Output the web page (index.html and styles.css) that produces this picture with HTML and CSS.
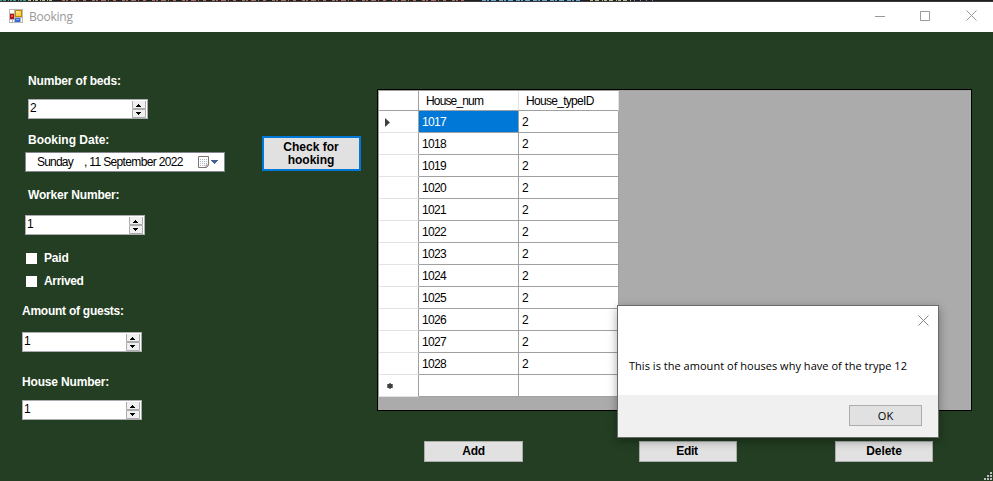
FILE: index.html
```
<!DOCTYPE html>
<html lang="en">
<head>
<meta charset="utf-8">
<title>Booking</title>
<link rel="stylesheet" href="styles.css">
</head>
<body>
<svg class="defs" width="0" height="0">
  <symbol id="close" viewBox="0 0 11 11"><path d="M.5.5l10 10M10.5.5l-10 10" fill="none" stroke="currentColor"/></symbol>
  <symbol id="spin" viewBox="0 0 14 17">
    <path d="M0 0h14v8H0zM0 9h14v8H0z" fill="#f0f0f0"/>
    <path d="M.5 0v7.5h13V0M.5 8.500h13v8H.5z" fill="none" stroke="#acacac"/>
    <path d="M6 3h1v1h1v1h1v1H4V5h1V4h1zM4 11h5v1H8v1H7v1H6v-1H5v-1H4z" fill="#000"/>
  </symbol>
</svg>
<div class="editor">
  <svg width="993" height="1" viewBox="0 0 993 1" fill="none">
    <path d="M0 .5h28" stroke="#3fa08e" stroke-dasharray="2 1 3 2 1 1"/>
    <path d="M28 .5h25" stroke="#b9b98f" stroke-dasharray="3 2 1 1"/>
    <path d="M62 .5h402" stroke="#a8705a" stroke-dasharray="3 1 2 3 5 2 1 4 3 6"/>
    <path d="M482 .5h98" stroke="#68a9d0" stroke-dasharray="4 1 2 2 5 3"/>
    <path d="M590 .5h42" stroke="#b9b98f" stroke-dasharray="3 2 4 3 1 1"/>
    <path d="M634 .5h21" stroke="#8084a0" stroke-dasharray="1 5"/>
  </svg>
</div>
<header class="titlebar">
  <svg class="app-icon" width="14" height="14" viewBox="0 0 14 14">
    <path d="M0 0h14v14H0z" fill="#b8b8b8"/><path d="M1 1h4v3H1zM1 11h2v2H1zM4 11h1v2H4zM12 9h1v4h-1z" fill="#fff"/>
    <path d="M1 5h4v5H1z" fill="#b21414"/><path d="M2 6h2v2H2z" fill="#e65a48"/>
    <path d="M6 1h7v7H6z" fill="#c18b00"/><path d="M7 2h5v5H7z" fill="#ffd04a"/><path d="M7 2h3v2H7z" fill="#ffe691"/>
    <path d="M6 9h5v4H6z" fill="#3a6dd8"/><path d="M7 10h3v1H7z" fill="#80adff"/>
  </svg>
  <span class="title">Booking</span>
  <svg class="minimize" width="10" height="11" viewBox="0 0 10 11"><path d="M0 5.5h10" stroke="#999"/></svg>
  <svg class="maximize" width="10" height="10" viewBox="0 0 10 10"><path d="M.5.5h9v9h-9z" fill="none" stroke="#999"/></svg>
  <svg class="close" width="11" height="11"><use href="#close"/></svg>
</header>
<main class="client">
  <form class="fields">
    <label class="label beds">Number of beds:</label>
    <div class="number n-beds"><span>2</span><svg width="14" height="17"><use href="#spin"/></svg></div>
    <label class="label date-label">Booking Date:</label>
    <div class="date"><span class="day">Sunday</span><span class="rest">, 11 September 2022</span>
      <svg width="21" height="13" viewBox="0 0 21 13">
        <path d="M.5.5h10v9l-2 2h-8z" fill="#fff" stroke="#7d7370"/><path d="M8 11V9h3" fill="#ccc" stroke="#a09794"/>
        <path d="M2 3.500h7M2 5.500h7M2 7.500h7M2 9.500h5" stroke="#a9b6c8" stroke-dasharray="1 1"/>
        <path d="M13 4h7v1h-1v1h-1v1h-1v1h-1V7h-1V6h-1V5h-1z" fill="#44618f"/>
      </svg>
    </div>
    <label class="label worker">Worker Number:</label>
    <div class="number n-worker"><span>1</span><svg width="14" height="17"><use href="#spin"/></svg></div>
    <div class="check paid"><span class="box"></span><span class="label">Paid</span></div>
    <div class="check arrived"><span class="box"></span><span class="label">Arrived</span></div>
    <label class="label guests">Amount of guests:</label>
    <div class="number n-guests"><span>1</span><svg width="14" height="17"><use href="#spin"/></svg></div>
    <label class="label house">House Number:</label>
    <div class="number n-house"><span>1</span><svg width="14" height="17"><use href="#spin"/></svg></div>
  </form>
  <button class="button lookup">Check for<br>hooking</button>
  <section class="records">
    <div class="grid">
      <div class="row head"><span class="rh"></span><span class="cell">House_num</span><span class="cell type-id">House_typeID</span></div>
      <div class="row"><span class="rh"><svg width="5" height="9" viewBox="0 0 5 9"><path d="M0 0l5 4.500-5 4.500z" fill="#404040"/></svg></span><span class="cell selected">1017</span><span class="cell">2</span></div>
      <div class="row"><span class="rh"></span><span class="cell">1018</span><span class="cell">2</span></div>
      <div class="row"><span class="rh"></span><span class="cell">1019</span><span class="cell">2</span></div>
      <div class="row"><span class="rh"></span><span class="cell">1020</span><span class="cell">2</span></div>
      <div class="row"><span class="rh"></span><span class="cell">1021</span><span class="cell">2</span></div>
      <div class="row"><span class="rh"></span><span class="cell">1022</span><span class="cell">2</span></div>
      <div class="row"><span class="rh"></span><span class="cell">1023</span><span class="cell">2</span></div>
      <div class="row"><span class="rh"></span><span class="cell">1024</span><span class="cell">2</span></div>
      <div class="row"><span class="rh"></span><span class="cell">1025</span><span class="cell">2</span></div>
      <div class="row"><span class="rh"></span><span class="cell">1026</span><span class="cell">2</span></div>
      <div class="row"><span class="rh"></span><span class="cell">1027</span><span class="cell">2</span></div>
      <div class="row"><span class="rh"></span><span class="cell">1028</span><span class="cell">2</span></div>
      <div class="row"><span class="rh new"><svg width="6" height="6" viewBox="0 0 6 6"><path d="M1 1h4v4H1z" fill="#404040"/><path d="M2 0h2v1H2zM2 5h2v1H2zM0 1h1v1H0zM5 1h1v1H5zM0 4h1v1H0zM5 4h1v1H5zM0 2h1v2H0zM5 2h1v2H5z" fill="#777"/></svg></span><span class="cell"></span><span class="cell"></span></div>
    </div>
    <div class="actions"><button class="button add">Add</button><button class="button edit">Edit</button><button class="button delete">Delete</button></div>
  </section>
  <svg class="grip" width="8" height="8" viewBox="0 0 8 8"><path d="M6 0h2v2H6zM3 3h2v2H3zM6 3h2v2H6zM0 6h2v2H0zM3 6h2v2H3zM6 6h2v2H6z" fill="#bfbfbf"/></svg>
</main>
<div class="dialog" role="dialog">
  <div class="message"><svg class="dismiss" width="11" height="11"><use href="#close"/></svg><p>This is the amount of houses why have of the trype 12</p></div>
  <div class="footer"><button class="ok">OK</button></div>
</div>
</body>
</html>
```

FILE: styles.css
```
* { box-sizing: border-box; }
body { margin: 0; width: 993px; height: 481px; overflow: hidden; background: #233e22; font: 12px/14px "Liberation Sans", sans-serif; color: #000; position: relative; }
svg { display: block; flex: none; }
.defs { position: absolute; }
span, label, button, p { white-space: nowrap; }
.editor { height: 2px; background: #1e1e1e; border-bottom: 1px solid #3c3a3e; }

.titlebar { height: 30px; background: #fff; display: flex; align-items: center; padding: 0 16px 0 9px; color: #999; }
.app-icon { margin-bottom: 2px; }
.title { margin-left: 6px; flex: 1; font: 12px/16px "Open Sans", sans-serif; letter-spacing: -.25px; }
.minimize { margin-right: 35px; margin-bottom: 1px; }
.maximize { margin-right: 36px; margin-bottom: 2px; }
.close { margin-bottom: 3px; }

.client { height: 449px; display: flex; align-items: flex-start; position: relative; }
.fields { width: 262px; flex: none; padding: 42px 0 0 22px; display: flex; flex-direction: column; align-items: flex-start; }
.label { height: 14px; color: #fff; font-weight: 700; font-size: 12px; letter-spacing: -.17px; }
.beds { margin: 0 0 11px 6px; }
.date-label { margin: 14px 0 5px 6px; letter-spacing: 0; }
.worker { margin: 16px 0 13px 6px; }
.guests { margin: 16px 0 14px; letter-spacing: -.25px; }
.house { margin: 23px 0 11px; }
.number { width: 120px; height: 20px; background: #fff; border: 1px solid #abadb3; padding: 1px 1px 0 1px; display: flex; justify-content: space-between; }
.number span { line-height: 15px; }
.n-beds { margin-left: 6px; }
.n-worker { margin-left: 3px; }
.date { width: 200px; height: 20px; margin-left: 3px; padding: 0 5px 0 11px; border: 1px solid #828790; background: #fff; display: flex; align-items: center; letter-spacing: -.65px; }
.day { width: 47px; letter-spacing: -.8px; }
.rest { flex: 1; }
.check { display: flex; align-items: center; height: 14px; margin-left: 4px; gap: 7px; }
.paid { margin-top: 16px; }
.arrived { margin-top: 9px; }
.arrived .label { letter-spacing: -.35px; }
.box { width: 11px; height: 11px; background: #fff; }

.button { margin: 0; padding: 0; background: #e1e1e1; border: 1px solid #adadad; color: #000; font: 700 12px/13px "Liberation Sans", sans-serif; width: 98px; height: 21px; }
.lookup { width: 99px; height: 35px; border: 2px solid #0078d7; margin-top: 104px; flex: none; padding-right: 1px; }

.records { margin: 57px 0 0 16px; width: 595px; }
.grid { height: 322px; border: 1px solid #000; background: #ababab; box-shadow: inset 1px 1px #a0a0a0; padding: 1px 0 0 1px; }
.row { display: grid; grid-template-columns: 40px 100px 100px; grid-template-rows: 100%; width: 240px; height: 22px; background: #fff; }
.rh { border-right: 1px solid #a0a0a0; border-bottom: 1px solid #e3e3e3; padding: 7px 0 0 6px; }
.rh.new { padding: 8px 0 0 8px; }
.cell { border-right: 1px solid #a0a0a0; border-bottom: 1px solid #a0a0a0; padding-left: 3px; line-height: 23px; letter-spacing: -.67px; }
.head { height: 20px; }
.head .rh { border-bottom-color: #a0a0a0; }
.head .cell { border-right-color: #e3e3e3; padding-left: 7px; line-height: 21px; letter-spacing: -.85px; }
.head .type-id { letter-spacing: -.7px; }
.selected { background: #0078d7; color: #fff; }
.actions { display: flex; padding: 30px 0 0 47px; }
.add { width: 99px; margin-right: 116px; letter-spacing: -.3px; }
.edit { margin-right: 98px; padding-right: 2px; letter-spacing: -.3px; }
.delete { letter-spacing: -.1px; }
.grip { position: absolute; right: 1px; bottom: 1px; }

.dialog { position: absolute; left: 617px; top: 305px; width: 322px; height: 133px; border: 1px solid #6a6c6a; background: #fff; box-shadow: 0 3px 9px rgba(0,0,0,.35); font: 11px/16px "Open Sans", sans-serif; display: flex; flex-direction: column; }
.message { flex: 1; padding: 9px 9px 0 10px; }
.dismiss { margin-left: auto; color: #888; }
.message p { margin: 32px 0 0 1px; letter-spacing: .03px; }
.footer { height: 42px; background: #f0f0f0; padding: 10px 16px 0 0; display: flex; justify-content: flex-end; align-items: flex-start; }
.ok { width: 73px; height: 21px; border: 1px solid #adadad; background: #e1e1e1; font: inherit; padding: 0; color: #000; }
```
